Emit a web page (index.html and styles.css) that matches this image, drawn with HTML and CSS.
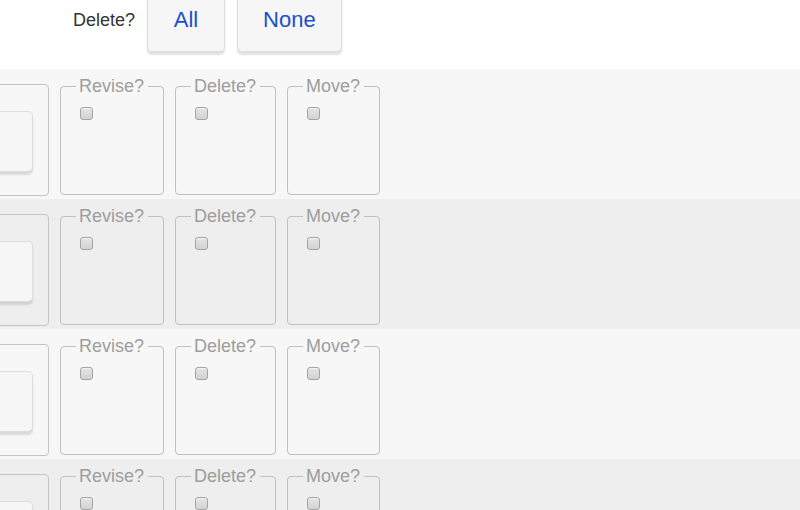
FILE: index.html
```html
<!DOCTYPE html>
<html lang="en">
<head>
<meta charset="utf-8">
<title>Bulk actions</title>
<link rel="stylesheet" href="styles.css">
</head>
<body>
<div class="toolbar">
  <span class="toolbar-label">Delete?</span>
  <button class="btn" type="button">All</button>
  <button class="btn" type="button">None</button>
</div>
<div class="rows">
  <div class="row row-odd">
    <div class="item"><span class="item-btn"></span></div>
    <fieldset class="opt"><legend>Revise?</legend><div class="opt-body"><span class="check"></span></div></fieldset>
    <fieldset class="opt"><legend>Delete?</legend><div class="opt-body"><span class="check"></span></div></fieldset>
    <fieldset class="opt"><legend>Move?</legend><div class="opt-body"><span class="check"></span></div></fieldset>
  </div>
  <div class="row row-even">
    <div class="item"><span class="item-btn"></span></div>
    <fieldset class="opt"><legend>Revise?</legend><div class="opt-body"><span class="check"></span></div></fieldset>
    <fieldset class="opt"><legend>Delete?</legend><div class="opt-body"><span class="check"></span></div></fieldset>
    <fieldset class="opt"><legend>Move?</legend><div class="opt-body"><span class="check"></span></div></fieldset>
  </div>
  <div class="row row-odd">
    <div class="item"><span class="item-btn"></span></div>
    <fieldset class="opt"><legend>Revise?</legend><div class="opt-body"><span class="check"></span></div></fieldset>
    <fieldset class="opt"><legend>Delete?</legend><div class="opt-body"><span class="check"></span></div></fieldset>
    <fieldset class="opt"><legend>Move?</legend><div class="opt-body"><span class="check"></span></div></fieldset>
  </div>
  <div class="row row-even">
    <div class="item"><span class="item-btn"></span></div>
    <fieldset class="opt"><legend>Revise?</legend><div class="opt-body"><span class="check"></span></div></fieldset>
    <fieldset class="opt"><legend>Delete?</legend><div class="opt-body"><span class="check"></span></div></fieldset>
    <fieldset class="opt"><legend>Move?</legend><div class="opt-body"><span class="check"></span></div></fieldset>
  </div>
</div>
</body>
</html>
```
FILE: styles.css
```css
html, body {
  margin: 0;
  padding: 0;
  background: #ffffff;
  overflow: hidden;
}

body {
  font-family: "Liberation Sans", Arial, sans-serif;
  color: #333333;
}

.toolbar {
  display: flex;
  align-items: flex-start;
  margin-top: -16px;
  height: 85px;
  padding-left: 73px;
  box-sizing: border-box;
}

.toolbar-label {
  font-size: 18px;
  line-height: 21px;
  margin-top: 26px;
  color: #333333;
}

.btn {
  font-family: "Liberation Sans", Arial, sans-serif;
  font-size: 22px;
  line-height: 26px;
  color: #1d50c6;
  background: #f6f6f6;
  border: 1px solid #dddddd;
  border-radius: 5px;
  box-shadow: 0 3px 2px rgba(0, 0, 0, 0.12);
  height: 68px;
  min-width: 78px;
  box-sizing: border-box;
  padding: 22px 25px 18px;
  margin-left: 12px;
  cursor: pointer;
}

.btn + .btn {
  margin-left: 12px;
}

.row {
  display: flex;
  align-items: flex-start;
  gap: 11px;
  height: 130px;
  overflow: hidden;
}

.row-odd { background: #f7f7f7; }
.row-even { background: #eeeeee; }

.item {
  flex: none;
  width: 100px;
  height: 112px;
  margin-left: -51px;
  margin-top: 15px;
  box-sizing: border-box;
  border: 1px solid #c4c4c4;
  border-radius: 4px;
  display: flex;
  justify-content: flex-end;
  padding: 26px 15px 0 0;
}

.item-btn {
  display: block;
  width: 70px;
  height: 61px;
  box-sizing: border-box;
  background: #f6f6f6;
  border: 1px solid #dddddd;
  border-radius: 5px;
  box-shadow: 0 3px 2px rgba(0, 0, 0, 0.12);
}

.opt {
  flex: none;
  margin: 7px 0 0;
  padding: 8px 15px 0;
  border: 1px solid #c0c0c0;
  border-radius: 4px;
  min-width: 0;
}

.opt legend {
  font-size: 18px;
  line-height: 20px;
  padding: 0 4px 0 3px;
  color: #9d9d9d;
}

.opt-body {
  height: 87px;
}

.check {
  display: block;
  width: 13px;
  height: 13px;
  box-sizing: border-box;
  margin: 3px 0 0 4px;
  border: 1px solid #a3a3a3;
  border-radius: 3px;
  background: linear-gradient(#e4e4e4, #d3d3d3);
  box-shadow: inset 0 1px 0 rgba(255, 255, 255, 0.6);
}
```
